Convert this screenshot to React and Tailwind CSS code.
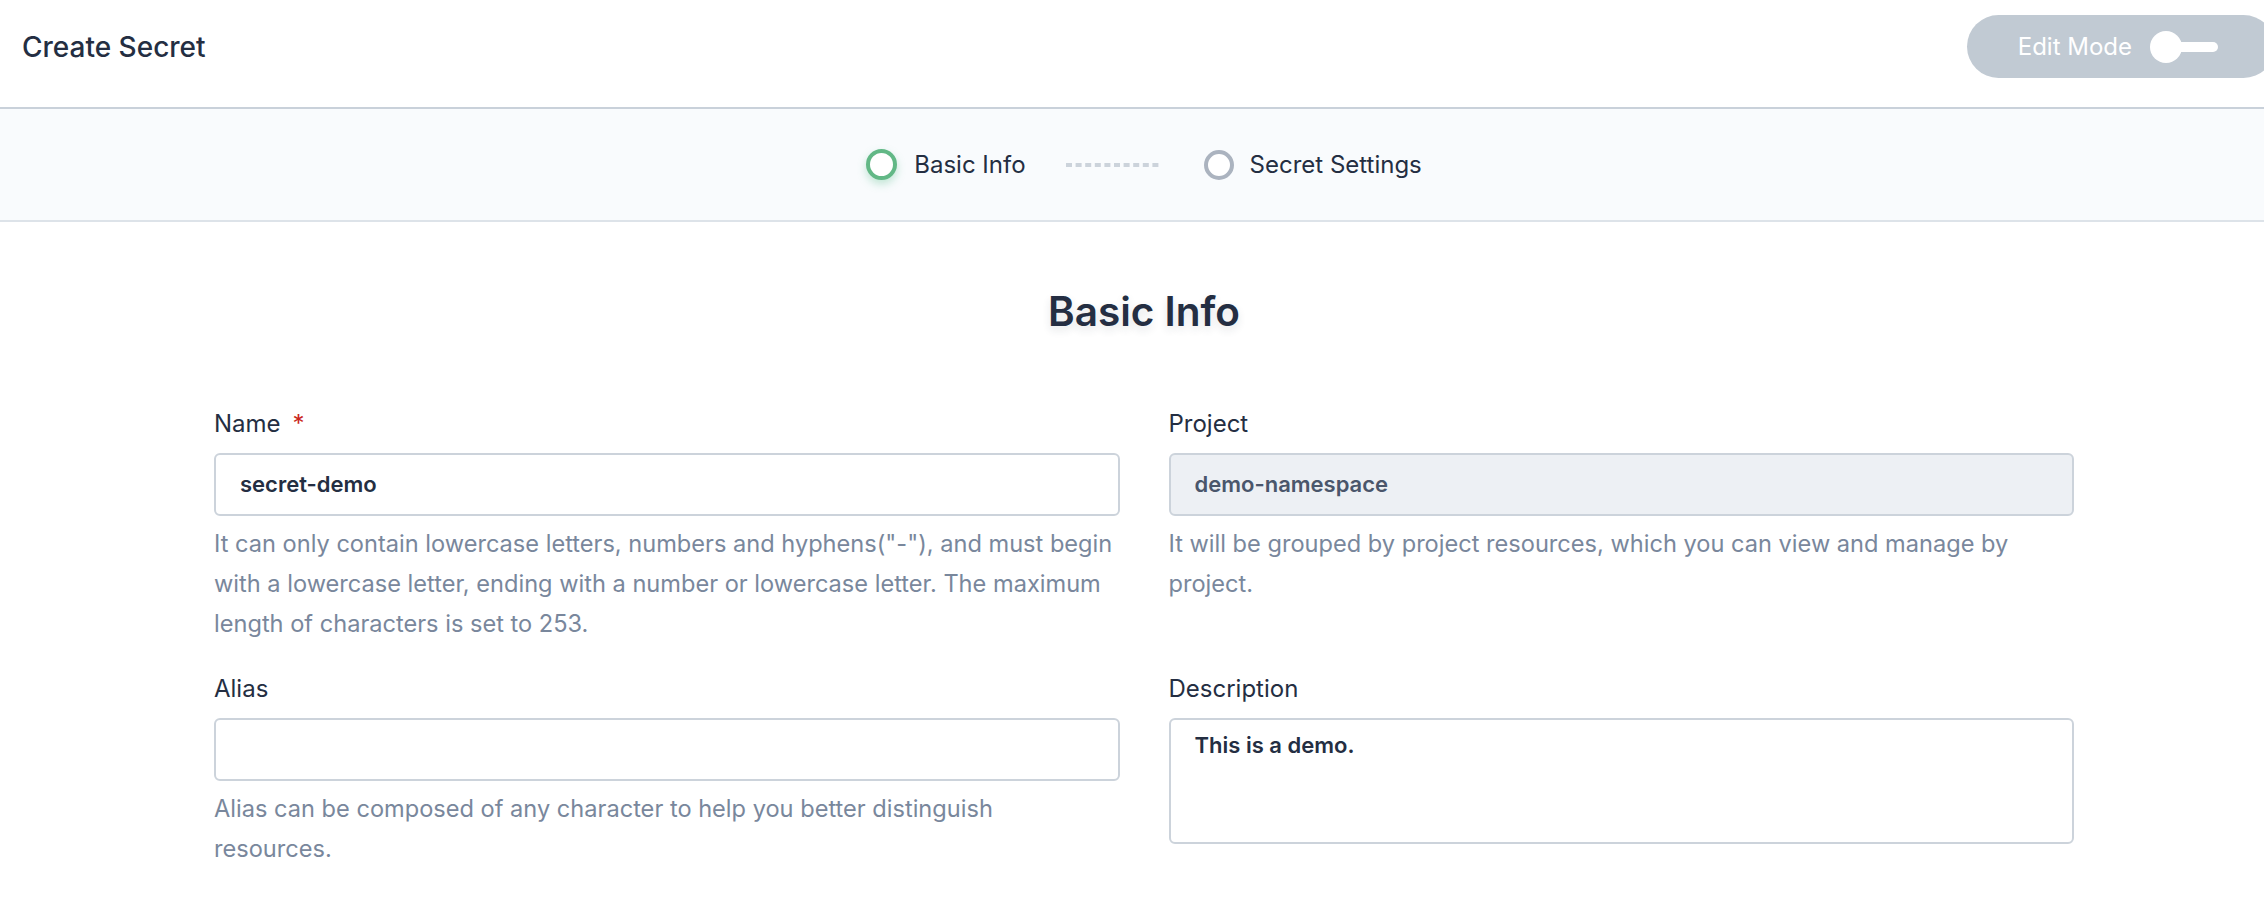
export default function App() {
  return (
    <div className="min-h-screen bg-white font-['Inter',sans-serif] text-[#242e42]">
      {/* Top bar */}
      <header className="flex items-center justify-between overflow-hidden border-b-2 border-[#c9d1da] pl-[22px] pt-[15px] pb-[29px]">
        <h1 className="text-[28px] font-medium leading-[32px]">Create Secret</h1>
        <button className="-mr-[11px] flex h-[63px] items-center rounded-full bg-[#c1cad3] pl-[51px] pr-[57px]">
          <span className="text-[24px] leading-[30px] text-white">Edit Mode</span>
          <span className="relative ml-[18px] h-[32px] w-[68px]">
            <span className="absolute left-[12px] right-0 top-[11px] h-[10px] rounded-full bg-white" />
            <span className="absolute left-0 top-0 h-[32px] w-[32px] rounded-full bg-white" />
          </span>
        </button>
      </header>

      {/* Steps */}
      <div className="flex h-[113px] items-center justify-center border-b-2 border-[#dde3e9] bg-[#f9fbfd] pl-[24px]">
        <div className="flex items-center">
          <span className="h-[31px] w-[31px] rounded-full border-[4px] border-[#62b886] bg-white shadow-[0_4px_8px_rgba(85,188,138,0.35)]" />
          <span className="ml-[17px] text-[24px] leading-[30px]">Basic Info</span>
          <svg className="ml-[40px]" width="96" height="4" viewBox="0 0 96 4">
            <line x1="0" y1="2" x2="96" y2="2" stroke="#ccd3db" strokeWidth="4" strokeDasharray="6 3.6" />
          </svg>
          <span className="ml-[42px] h-[30px] w-[30px] rounded-full border-[4px] border-[#abb3bf] bg-white" />
          <span className="ml-[16px] text-[24px] leading-[30px]">Secret Settings</span>
        </div>
      </div>

      <main className="pl-[214px] pr-[190px]">
        <h2 className="mt-[66px] text-center text-[40.5px] font-semibold leading-[48px] [text-shadow:0_4px_8px_rgba(36,46,66,0.12)]">
          Basic Info
        </h2>

        <div className="mt-[73px] grid grid-cols-2 gap-x-[49px] gap-y-[30px]">
          {/* Name */}
          <div>
            <div className="mb-[14px] text-[24px] leading-[30px]">
              Name<span className="ml-[12px] text-[#ca2621]">*</span>
            </div>
            <div className="flex h-[63px] items-center rounded-[6px] border-2 border-[#ccd3db] px-[24px] text-[22px] font-semibold">
              secret-demo
            </div>
            <p className="mt-[8px] whitespace-nowrap text-[23.6px] leading-[40px] text-[#79879c]">
              It can only contain lowercase letters, numbers and hyphens("-"), and must begin
              <br />
              with a lowercase letter, ending with a number or lowercase letter. The maximum
              <br />
              length of characters is set to 253.
            </p>
          </div>

          {/* Project */}
          <div>
            <div className="mb-[14px] text-[24px] leading-[30px]">Project</div>
            <div className="flex h-[63px] items-center rounded-[6px] border-2 border-[#ccd3db] bg-[#edf0f4] px-[24px] text-[22px] font-semibold text-[#4a566b]">
              demo-namespace
            </div>
            <p className="mt-[8px] whitespace-nowrap text-[23.6px] leading-[40px] text-[#79879c]">
              It will be grouped by project resources, which you can view and manage by
              <br />
              project.
            </p>
          </div>

          {/* Alias */}
          <div>
            <div className="mb-[14px] text-[24px] leading-[30px]">Alias</div>
            <div className="h-[63px] rounded-[6px] border-2 border-[#ccd3db]" />
            <p className="mt-[8px] whitespace-nowrap text-[23.6px] leading-[40px] text-[#79879c]">
              Alias can be composed of any character to help you better distinguish
              <br />
              resources.
            </p>
          </div>

          {/* Description */}
          <div>
            <div className="mb-[14px] text-[24px] leading-[30px]">Description</div>
            <div className="h-[126px] rounded-[6px] border-2 border-[#ccd3db] px-[24px] pt-[10px] text-[22px] font-semibold leading-[30px]">
              This is a demo.
            </div>
          </div>
        </div>
      </main>
    </div>
  )
}
